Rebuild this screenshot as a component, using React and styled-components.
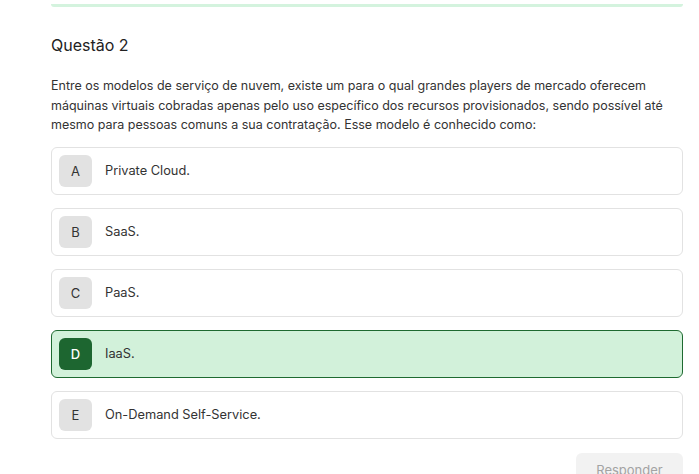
import React from "react";
import styled, { createGlobalStyle } from "styled-components";

const Global = createGlobalStyle`
  html, body { margin: 0; padding: 0; background: #fff; }
  body { font-family: Inter, "Noto Sans", sans-serif; color: #222; }
`;

const Page = styled.div`
  width: 632px;
  padding-left: 51px;
  display: flex;
  flex-direction: column;
`;

const TopBar = styled.div`
  height: 3px;
  margin-top: 4px;
  background: #d4f3de;
  border-radius: 0 0 4px 4px;
`;

const Title = styled.h2`
  margin: 28px 0 0;
  font-size: 16px;
  font-weight: 400;
  line-height: 20px;
  color: #222;
`;

const Statement = styled.p`
  margin: 21px 0 0;
  font-size: 12.5px;
  line-height: 19.5px;
  color: #333;
`;

const Options = styled.div`
  margin-top: 12px;
  display: flex;
  flex-direction: column;
  gap: 13px;
`;

const Option = styled.div`
  display: flex;
  align-items: center;
  gap: 13px;
  padding: 7px;
  border-radius: 6px;
  border: 1px solid ${(p) => (p.$selected ? "#1e6a30" : "#e2e2e2")};
  background: ${(p) => (p.$selected ? "#d2f1da" : "#fff")};
`;

const Letter = styled.div`
  width: 33px;
  height: 32px;
  border-radius: 6px;
  display: flex;
  align-items: center;
  justify-content: center;
  font-size: 13px;
  font-weight: ${(p) => (p.$selected ? 500 : 400)};
  background: ${(p) => (p.$selected ? "#1d6630" : "#e2e2e2")};
  color: ${(p) => (p.$selected ? "#fff" : "#333")};
`;

const OptionText = styled.span`
  font-size: 12.8px;
  color: #333;
`;

const Footer = styled.div`
  display: flex;
  justify-content: flex-end;
  margin-top: 14px;
`;

const Button = styled.button`
  width: 107px;
  height: 34px;
  border: none;
  border-radius: 6px;
  background: #f2f2f2;
  color: #a3a3a3;
  font-family: Inter, sans-serif;
  font-size: 13px;
`;

const options = [
  ["A", "Private Cloud."],
  ["B", "SaaS."],
  ["C", "PaaS."],
  ["D", "IaaS."],
  ["E", "On-Demand Self-Service."],
];

export default function App() {
  return (
    <>
      <Global />
      <Page>
        <TopBar />
        <Title>Questão 2</Title>
        <Statement>
          Entre os modelos de serviço de nuvem, existe um para o qual grandes players de mercado oferecem
          máquinas virtuais cobradas apenas pelo uso específico dos recursos provisionados, sendo possível até
          mesmo para pessoas comuns a sua contratação. Esse modelo é conhecido como:
        </Statement>
        <Options>
          {options.map(([l, t]) => (
            <Option key={l} $selected={l === "D"}>
              <Letter $selected={l === "D"}>{l}</Letter>
              <OptionText>{t}</OptionText>
            </Option>
          ))}
        </Options>
        <Footer>
          <Button>Responder</Button>
        </Footer>
      </Page>
    </>
  );
}
